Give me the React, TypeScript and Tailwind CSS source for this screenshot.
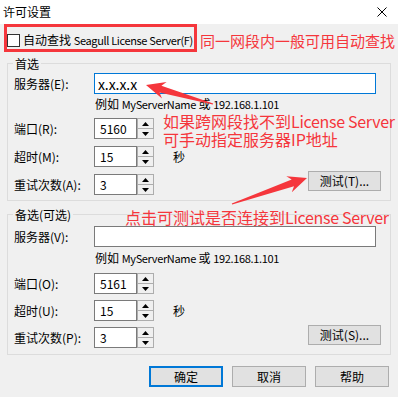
import type { ReactNode } from 'react'

const FONT = "font-['Noto_Sans_CJK_SC','Noto_Sans',sans-serif]"
const RED = 'text-[#f5363c]'

// tapered arrow polygon from tail to tip
function arrowPoints(tx: number, ty: number, hx: number, hy: number) {
  const dx = hx - tx
  const dy = hy - ty
  const len = Math.hypot(dx, dy)
  const ux = dx / len
  const uy = dy / len
  const nx = -uy
  const ny = ux
  const p = (a: number, s: number) => `${(hx - ux * a + nx * s).toFixed(1)},${(hy - uy * a + ny * s).toFixed(1)}`
  return [
    p(0, 0),
    p(19, 8.5),
    p(15, 3.5),
    p(len, 0.6),
    p(len, -0.6),
    p(15, -3.5),
    p(19, -8.5),
  ].join(' ')
}

// latin run inside dialog text is narrower than the CJK font's own latin
function L({ children }: { children: ReactNode }) {
  return <span className="text-[11px] tracking-[-0.35px]">{children}</span>
}

function Tri({ up }: { up?: boolean }) {
  return (
    <svg width="7" height="4" viewBox="0 0 7 4">
      <polygon points={up ? '3.5,0 7,4 0,4' : '0,0 7,0 3.5,4'} fill="#000" />
    </svg>
  )
}

function Spin({ value }: { value: string }) {
  return (
    <div className="flex shrink-0">
      <div className="w-[43px] h-[21px] border border-[#7a7a7a] bg-white flex items-center pl-[5px] text-[12px] leading-none text-black">
        {value}
      </div>
      <div className="w-[17px] h-[21px] flex flex-col">
        <div className="h-[11px] border border-[#adadad] bg-[#f0f0f0] flex items-center justify-center">
          <Tri up />
        </div>
        <div className="h-[10px] border border-t-0 border-[#adadad] bg-[#f0f0f0] flex items-center justify-center">
          <Tri />
        </div>
      </div>
    </div>
  )
}

function Label({ children }: { children: ReactNode }) {
  return <span className="w-[80px] shrink-0 text-[12px] leading-[16px] text-black">{children}</span>
}

function Btn({ children, size, primary }: { children: ReactNode; size: string; primary?: boolean }) {
  return (
    <div
      className={`${size} shrink-0 flex items-center justify-center bg-[#e1e1e1] text-[12px] leading-none text-black ${
        primary ? 'border-2 border-[#0078d7]' : 'border border-[#adadad]'
      }`}
    >
      {children}
    </div>
  )
}

function Group({ label, className, children }: { label: string; className: string; children: ReactNode }) {
  return (
    <div className={`relative mx-[7px] border border-[#dcdcdc] pl-[6px] pr-[9px] ${className}`}>
      <span className="absolute -top-[8px] left-[5px] px-[2px] bg-[#f0f0f0] text-[12px] leading-[16px] text-black">
        {label}
      </span>
      {children}
    </div>
  )
}

function Example({ className }: { className: string }) {
  return (
    <div className={`ml-[81px] text-[12px] leading-[14px] text-black whitespace-nowrap ${className}`}>
      例如 <L>MyServerName</L> 或 <L>192.168.1.101</L>
    </div>
  )
}

export default function App() {
  return (
    <div className={`relative w-[398px] h-[397px] overflow-hidden bg-[#f0f0f0] ${FONT}`}>
      {/* title bar */}
      <div className="h-[24px] bg-white flex items-center justify-between pl-[3px] pr-[11px]">
        <span className="text-[12px] leading-none text-black">许可设置</span>
        <svg width="10" height="10" viewBox="0 0 10 10">
          <path d="M0.5 0.5 L9.5 9.5 M9.5 0.5 L0.5 9.5" stroke="#000" strokeWidth="1" />
        </svg>
      </div>

      {/* auto search row */}
      <div className="flex items-start pl-[4px]">
        <div className="w-[193px] h-[28px] shrink-0 border-[3px] border-[#f5363c] flex items-center pt-[4px]">
          <div className="w-[13px] h-[13px] shrink-0 border border-[#333] bg-white" />
          <span className="ml-[3px] text-[12px] leading-[16px] text-black whitespace-nowrap">
            自动查找 <L>Seagull License Server(F)</L>
          </span>
        </div>
        <span className={`ml-[3px] mt-[7px] text-[15px] leading-[20px] ${RED} whitespace-nowrap`}>
          同一网段内一般可用自动查找
        </span>
      </div>

      {/* primary */}
      <Group label="首选" className="mt-[11px] pt-[9px] pb-[5px]">
        <div className="flex items-center">
          <Label>服务器(E):</Label>
          <div className="w-[282px] h-[21px] border border-[#0078d7] bg-white flex items-center pl-[3px] text-[14px] leading-none text-black">
            x.x.x.x
          </div>
        </div>
        <Example className="mt-[3px]" />
        <div className="mt-[7px] flex items-center">
          <Label>端口(R):</Label>
          <Spin value="5160" />
        </div>
        <div className="mt-[7px] flex items-center">
          <Label>超时(M):</Label>
          <Spin value="15" />
          <span className="ml-[19px] text-[12px] leading-[16px] text-black">秒</span>
        </div>
        <div className="mt-[4px] flex items-start justify-between">
          <div className="mt-[3px] flex items-center">
            <Label>重试次数(A):</Label>
            <Spin value="3" />
          </div>
          <Btn size="w-[73px] h-[20px]">测试(T)...</Btn>
        </div>
      </Group>

      {/* secondary */}
      <Group label="备选(可选)" className="mt-[13px] pt-[11px] pb-[6px]">
        <div className="flex items-center">
          <Label>服务器(V):</Label>
          <div className="w-[282px] h-[21px] border border-[#7a7a7a] bg-white" />
        </div>
        <Example className="mt-[4px]" />
        <div className="mt-[8px] flex items-center">
          <Label>端口(O):</Label>
          <Spin value="5161" />
        </div>
        <div className="mt-[6px] flex items-center">
          <Label>超时(U):</Label>
          <Spin value="15" />
          <span className="ml-[19px] text-[12px] leading-[16px] text-black">秒</span>
        </div>
        <div className="mt-[4px] flex items-start justify-between">
          <div className="mt-[2px] flex items-center">
            <Label>重试次数(P):</Label>
            <Spin value="3" />
          </div>
          <Btn size="w-[73px] h-[20px]">测试(S)...</Btn>
        </div>
      </Group>

      {/* dialog buttons */}
      <div className="mt-[11px] flex justify-end gap-[9px] pr-[9px]">
        <Btn size="w-[74px] h-[21px]" primary>确定</Btn>
        <Btn size="w-[74px] h-[21px]">取消</Btn>
        <Btn size="w-[74px] h-[21px]">帮助</Btn>
      </div>

      {/* annotations */}
      <div className={`absolute left-[163px] top-[112px] text-[16px] leading-[18px] ${RED} whitespace-nowrap`}>
        <div>
          如果跨网段找不到<span className="tracking-[-0.3px]">License Server</span>
        </div>
        <div>可手动指定服务器IP地址</div>
      </div>
      <div className={`absolute left-[125px] top-[208px] text-[16px] leading-[18px] ${RED} whitespace-nowrap`}>
        点击可测试是否连接到<span className="tracking-[-0.3px]">License Server</span>
      </div>
      <svg className="absolute inset-0 pointer-events-none" width="398" height="397">
        <polygon points={arrowPoints(213, 104, 146, 85)} fill="#f5363c" />
        <polygon points={arrowPoints(232, 204, 307, 178)} fill="#f5363c" />
      </svg>
    </div>
  )
}
